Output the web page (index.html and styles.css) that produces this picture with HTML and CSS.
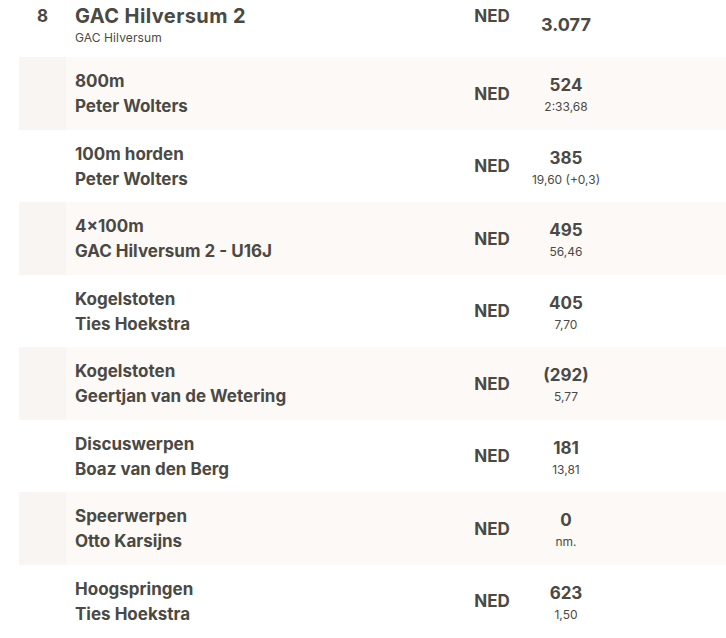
FILE: index.html
```html
<!DOCTYPE html>
<html lang="nl">
<head>
<meta charset="utf-8">
<link rel="stylesheet" href="styles.css">
</head>
<body>
<div class="table">
  <div class="row head">
    <div class="rank">8</div>
    <div class="name">
      <div class="team">GAC Hilversum 2</div>
      <div class="club">GAC Hilversum</div>
    </div>
    <div class="nat">NED</div>
    <div class="score"><div class="pts big">3.077</div></div>
    <div class="rest"></div>
  </div>

  <div class="row alt">
    <div class="rank"></div>
    <div class="name"><div>800m</div><div>Peter Wolters</div></div>
    <div class="nat">NED</div>
    <div class="score"><div class="pts">524</div><div class="perf">2:33,68</div></div>
    <div class="rest"></div>
  </div>

  <div class="row">
    <div class="rank"></div>
    <div class="name"><div>100m horden</div><div>Peter Wolters</div></div>
    <div class="nat">NED</div>
    <div class="score"><div class="pts">385</div><div class="perf">19,60 (+0,3)</div></div>
    <div class="rest"></div>
  </div>

  <div class="row alt">
    <div class="rank"></div>
    <div class="name"><div>4×100m</div><div>GAC Hilversum 2 - U16J</div></div>
    <div class="nat">NED</div>
    <div class="score"><div class="pts">495</div><div class="perf">56,46</div></div>
    <div class="rest"></div>
  </div>

  <div class="row">
    <div class="rank"></div>
    <div class="name"><div>Kogelstoten</div><div>Ties Hoekstra</div></div>
    <div class="nat">NED</div>
    <div class="score"><div class="pts">405</div><div class="perf">7,70</div></div>
    <div class="rest"></div>
  </div>

  <div class="row alt">
    <div class="rank"></div>
    <div class="name"><div>Kogelstoten</div><div>Geertjan van de Wetering</div></div>
    <div class="nat">NED</div>
    <div class="score"><div class="pts">(292)</div><div class="perf">5,77</div></div>
    <div class="rest"></div>
  </div>

  <div class="row">
    <div class="rank"></div>
    <div class="name"><div>Discuswerpen</div><div>Boaz van den Berg</div></div>
    <div class="nat">NED</div>
    <div class="score"><div class="pts">181</div><div class="perf">13,81</div></div>
    <div class="rest"></div>
  </div>

  <div class="row alt">
    <div class="rank"></div>
    <div class="name"><div>Speerwerpen</div><div>Otto Karsijns</div></div>
    <div class="nat">NED</div>
    <div class="score"><div class="pts">0</div><div class="perf">nm.</div></div>
    <div class="rest"></div>
  </div>

  <div class="row">
    <div class="rank"></div>
    <div class="name"><div>Hoogspringen</div><div>Ties Hoekstra</div></div>
    <div class="nat">NED</div>
    <div class="score"><div class="pts">623</div><div class="perf">1,50</div></div>
    <div class="rest"></div>
  </div>
</div>
</body>
</html>
```

FILE: styles.css
```css
html, body {
  margin: 0;
  padding: 0;
  background: #ffffff;
}

body {
  font-family: Inter, "Noto Sans", "Liberation Sans", sans-serif;
  color: #4a4944;
  overflow: hidden;
}

.table {
  padding-left: 19px;
}

.row {
  display: grid;
  grid-template-columns: 47px 390px 72px 76px 1fr;
  height: 72.5px;
  align-items: center;
}

.row.alt {
  background: #fcf9f6;
}

.row.alt .rank {
  background: #f9f5f2;
  align-self: stretch;
}

.name {
  padding-left: 9px;
  padding-top: 2px;
  font-size: 17px;
  font-weight: 700;
  line-height: 25px;
}

.nat {
  text-align: center;
  font-size: 17px;
  font-weight: 700;
  line-height: 25px;
  padding-top: 2px;
}

.score {
  text-align: center;
  padding-top: 2px;
}

.pts {
  font-size: 17px;
  font-weight: 700;
  line-height: 24px;
}

.perf {
  font-size: 12px;
  line-height: 16px;
  margin-top: 2px;
}

.row.head {
  height: 57px;
  align-items: start;
}

.head .rank {
  padding-top: 3px;
  text-align: center;
  font-size: 17px;
  font-weight: 700;
  line-height: 26px;
}

.head .name {
  padding-top: 3px;
}

.team {
  font-size: 20px;
  letter-spacing: 0.4px;
  line-height: 26px;
}

.club {
  font-size: 12px;
  font-weight: 400;
  line-height: 18px;
  letter-spacing: 0.1px;
}

.head .nat {
  padding-top: 3px;
  line-height: 26px;
}

.head .score {
  padding-top: 12px;
}

.pts.big {
  font-size: 18px;
  line-height: 26px;
}
```
